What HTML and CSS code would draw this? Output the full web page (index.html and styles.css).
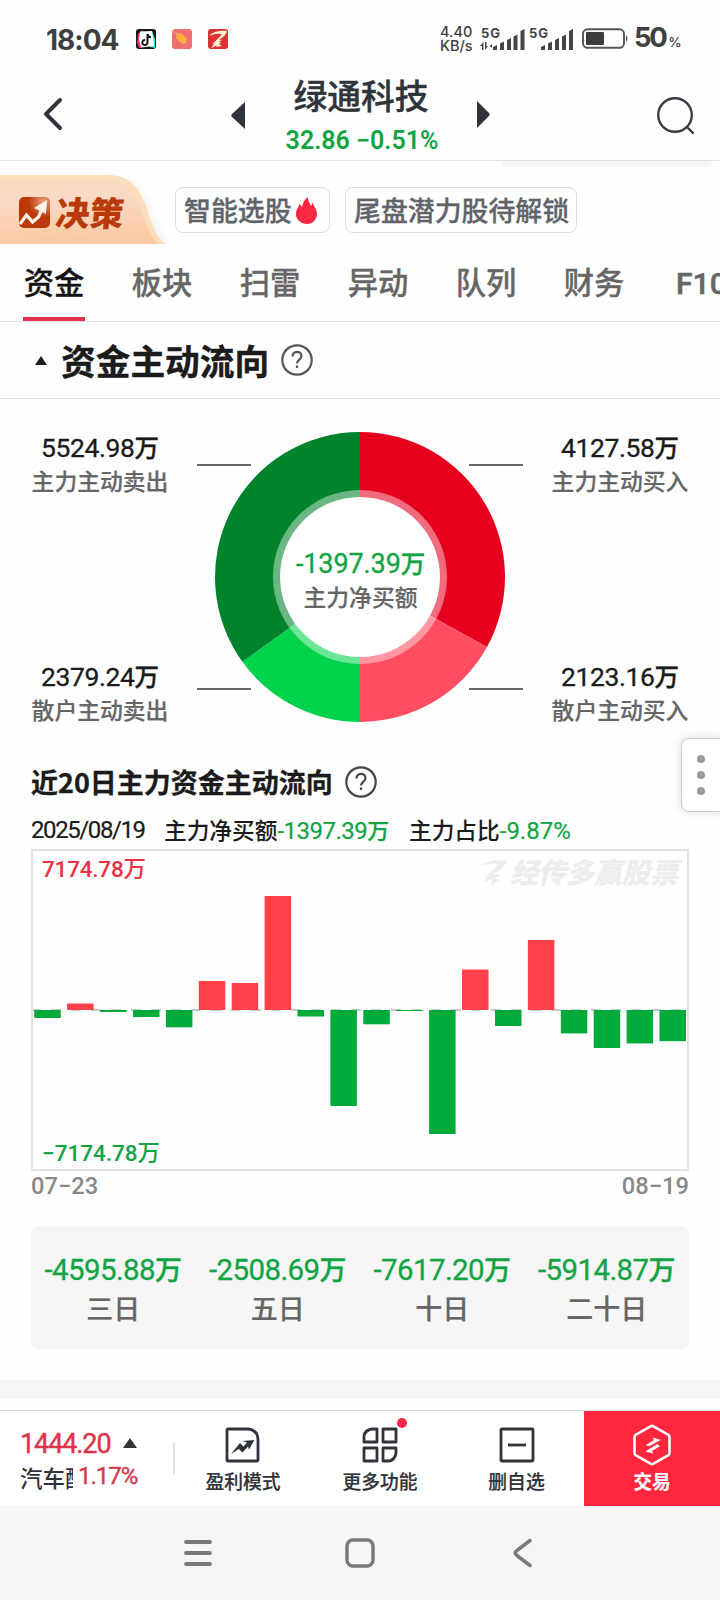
FILE: index.html
```html
<!DOCTYPE html>
<html lang="zh-CN">
<head>
<meta charset="utf-8">
<title>绿通科技</title>
<link rel="stylesheet" href="styles.css">
</head>
<body>
<div class="phone">
  <div class="status">
    <span class="clock">18:04</span>
    <svg class="app-icons" width="92" height="20" viewBox="0 0 92 20">
      <rect width="20" height="20" rx="3" fill="#151515"/>
      <path d="M2 5l5-4v17l-4 1-2-6z" fill="#ff3263"/><path d="M16 2l3 8v9l-5-1z" fill="#36e6ea"/>
      <path d="M4 2.500l12-.5 2 15-13 1.500-2-8z" fill="#fff"/>
      <path d="M11.500 5v8.500a2.600 2.600 0 1 1-2.400-2.600M11.500 5q.6 3 3.500 3.200" fill="none" stroke="#151515" stroke-width="2"/>
      <rect x="36" width="20" height="20" rx="3" fill="#f07072"/>
      <path d="M41 5l4-1 6 6-1 4-4 1-6-6z" fill="#ffb03b"/><path d="M36 1l5 4" stroke="#ffd9a0" stroke-dasharray="1.500 1"/>
      <rect x="72" width="20" height="20" rx="3" fill="#d93434"/>
      <path d="M74 6q6-5 17-4-1 5-8 8.500l3 .5-3 1.500 2 1-2 1.500 3 2-6 1 1-2-6 3.500 3-4.500-2 .5 8-8q2-2 1-2.500-5-1-11 1.500z" fill="#fff0d0"/>
    </svg>
    <span class="net"><span>4.40</span><span>KB/s</span></span>
    <svg class="signals" width="95" height="26" viewBox="0 0 95 26" fill="#444">
      <text x="1" y="12" class="g5" textLength="19">5G</text><text x="49" y="12" class="g5" textLength="19">5G</text>
      <path d="M0 20l3.500-4v8H2v-4zM5 16h1.500v4H8l-3 4zM9.500 20l2.500-2v4z"/>
      <path d="M13 21l4-2v5h-4zM20 17.500l4-2V24h-4zM27 14l4-2v12h-4zM33.500 10.500l4-2V24h-4zM40.500 5l4-2v21h-4z"/>
      <path d="M61 21l4-2v5h-4zM68 17.500l4-2V24h-4zM75 14l4-2v12h-4zM82 10.500l4-2V24h-4zM89 5l4-2v21h-4z"/>
    </svg>
    <svg class="battery" width="48" height="22" viewBox="0 0 48 22">
      <rect x="1" y="1.300" width="41" height="18.500" rx="4.500" fill="none" stroke="#555" stroke-width="1.900"/>
      <rect x="4" y="4" width="18" height="13" rx="1" fill="#3d3d3d"/><path d="M44 7q3 3.500 0 7z" fill="#444"/>
    </svg>
    <span class="pct">50<small>%</small></span>
  </div>

  <header class="header">
    <svg class="back" width="20" height="34" viewBox="0 0 20 34"><path d="M17 3L3 17l14 14" fill="none" stroke="#2f333a" stroke-width="4" stroke-linecap="round" stroke-linejoin="round"/></svg>
    <svg class="prev" width="14" height="27"><path d="M14 0v27L1 15q-1.500-1.500 0-3z" fill="#2f333a"/></svg>
    <div class="stock"><h1>绿通科技</h1><p>32.86 −0.51%</p></div>
    <svg class="next" width="14" height="27"><path d="M0 0v27l12-12q1.500-1.500 0-3z" fill="#2f333a"/></svg>
    <svg class="search" width="40" height="40" viewBox="0 0 40 40" fill="none" stroke="#3c3c44" stroke-width="2.400" stroke-linecap="round"><circle cx="19" cy="19" r="16.800"/><path d="M31 31l6 6"/></svg>
  </header>
  <div class="peek"><i></i></div>

  <div class="promo">
    <div class="decision">
      <svg class="decision-bg" width="170" height="69" viewBox="0 0 170 69">
        <defs>
          <linearGradient id="peach" x1="0" y1="0" x2=".15" y2="1"><stop offset="0" stop-color="#f8d9c0"/><stop offset=".35" stop-color="#f9dac5"/><stop offset="1" stop-color="#fbc9a2"/></linearGradient>
          <filter id="soft" x="-10%" y="-10%" width="125%" height="125%"><feGaussianBlur stdDeviation="4"/></filter>
        </defs>
        <path d="M60 4h55q24 0 33 29 8 24 19 35H60z" fill="#e9e4e2" opacity=".6" filter="url(#soft)"/>
        <path d="M0 0h110q26 0 37 34 8 29 19 35H0z" fill="#fbdfbd"/>
        <path d="M0 5h108q23 0 33 29 8 27 18 35H0z" fill="url(#peach)"/>
      </svg>
      <div class="decision-body">
        <svg width="32" height="31" viewBox="0 0 32 31">
          <defs><radialGradient id="rust" cx=".8" cy=".15" r=".5"><stop offset="0" stop-color="#eea07a"/><stop offset="1" stop-color="#b93a08"/></radialGradient></defs>
          <rect x="0" y="0" width="31" height="31" rx="5" fill="url(#rust)"/>
          <path d="M1 27L7.500 18l6 7 6-5 4-9" fill="none" stroke="#fff2e6" stroke-width="3.200"/><path d="M15 11l13-8-1 14z" fill="#fff2e6"/>
        </svg>
        <span>决策</span>
      </div>
    </div>
    <div class="chip chip-a">智能选股<svg width="22" height="27" viewBox="0 0 22 27"><path d="M11.500 0q.5 4 3.500 9 1.500-1.500 1.500-4 .5 3 3 6.500c4 7-.5 15.500-8.500 15.500S-2.500 19.500 1 12.500q2-3 2-5.500 2 1 3 3Q7 4 11.500 0z" fill="#fa2842"/></svg></div>
    <div class="chip chip-b">尾盘潜力股待解锁</div>
  </div>

  <nav class="tabs">
    <span class="on">资金</span><span>板块</span><span>扫雷</span><span>异动</span><span>队列</span><span>财务</span><span class="f10">F10</span>
  </nav>

  <div class="section-head">
    <svg width="12" height="9"><path d="M6 0l6 9H0z" fill="#1b1b1b"/></svg>
    <h2>资金主动流向</h2>
    <svg width="32" height="32" viewBox="0 0 32 32" fill="none" stroke="#555" stroke-width="2.200"><circle cx="16" cy="16" r="14.700"/><path d="M11.500 12.500c0-6 9-6 9-.5 0 4-4.500 3.800-4.500 7.500"/><path d="M16 21.500v2.500"/></svg>
  </div>

  <section class="flow">
    <div class="side left">
      <div class="amount"><b>5524.98<em>万</em></b><span>主力主动卖出</span></div>
      <div class="amount"><b>2379.24<em>万</em></b><span>散户主动卖出</span></div>
    </div>
    <div class="donut">
      <svg width="328" height="292" viewBox="0 0 328 292">
        <g transform="translate(164 146)">
          <path d="M0 0V-145A145 145 0 0 1 126.980 70Z" fill="#e6001e"/>
          <path d="M0 0L126.980 70A145 145 0 0 1 0 145Z" fill="#ff4d61"/>
          <path d="M0 0V145A145 145 0 0 1 -117.600 84.800Z" fill="#00d34a"/>
          <path d="M0 0L-117.600 84.800A145 145 0 0 1 0 -145Z" fill="#00842b"/>
          <circle r="87" fill="#fff" opacity=".42"/><circle r="80" fill="#fff"/>
        </g>
        <path d="M1 34h54M1 258h54M273 34h54M273 258h54" stroke="#666" stroke-width="2"/>
      </svg>
      <div class="net-buy"><b>-1397.39<em>万</em></b><span>主力净买额</span></div>
    </div>
    <div class="side right">
      <div class="amount"><b>4127.58<em>万</em></b><span>主力主动买入</span></div>
      <div class="amount"><b>2123.16<em>万</em></b><span>散户主动买入</span></div>
    </div>
  </section>

  <section class="history">
    <div class="history-head">
      <h3>近20日主力资金主动流向</h3>
      <svg width="32" height="32" viewBox="0 0 32 32" fill="none" stroke="#444" stroke-width="2.200"><circle cx="16" cy="16" r="14.700"/><path d="M11.500 12.500c0-6 9-6 9-.5 0 4-4.500 3.800-4.500 7.500"/><path d="M16 21.500v2.500"/></svg>
    </div>
    <div class="meta"><span class="date">2025/08/19</span><span class="m1">主力净买额<i>-1397.39<em>万</em></i></span><span class="m2">主力占比<i>-9.87%</i></span></div>
    <div class="chart">
      <svg width="658" height="322" viewBox="0 0 658 322">
        <g class="mark" fill="#ededed">
          <path d="M448 17q12-8 28-5-2 7-14 13l9 1-8 3 6 2-9 5 1-6-8 3 4-5-4 1 10-9q5-4 3-5-7-1-18 2z"/>
          <text x="479" y="34" textLength="168">经传多赢股票</text>
        </g>
        <path d="M0 161h658" stroke="#c9c9c9" stroke-width="2" stroke-dasharray="10 10"/>
        <g fill="#ff4149">
          <rect x="36.100" y="154.500" width="26.500" height="6.500"/><rect x="167.800" y="132" width="26.500" height="29"/><rect x="200.700" y="134" width="26.500" height="27"/><rect x="233.600" y="47" width="26.500" height="114"/><rect x="431" y="120.500" width="26.500" height="40.500"/><rect x="496.900" y="91" width="26.500" height="70"/>
        </g>
        <g fill="#00ab3a">
          <rect x="3.200" y="161" width="26.500" height="8"/><rect x="69.100" y="161" width="26.500" height="2"/><rect x="102" y="161" width="26.500" height="7"/><rect x="134.900" y="161" width="26.500" height="17.300"/><rect x="266.500" y="161" width="26.500" height="6.500"/><rect x="299.400" y="161" width="26.500" height="96"/><rect x="332.300" y="161" width="26.500" height="14.300"/><rect x="365.200" y="161" width="26.500" height="1"/><rect x="398.100" y="161" width="26.500" height="124"/><rect x="464" y="161" width="26.500" height="16"/><rect x="529.800" y="161" width="26.500" height="23.400"/><rect x="562.700" y="161" width="26.500" height="38"/><rect x="595.600" y="161" width="26.500" height="33.400"/><rect x="628.500" y="161" width="26.500" height="31.200"/>
        </g>
        <rect x="1" y="1" width="656" height="320" fill="none" stroke="#e3e3e3" stroke-width="2"/>
        <text x="11" y="28" class="axis" fill="#e83246" textLength="104">7174.78万</text>
        <text x="11" y="312" class="axis" fill="#12a443" textLength="118">−7174.78万</text>
      </svg>
    </div>
    <div class="dates"><span>07−23</span><span>08−19</span></div>
    <div class="periods">
      <div><b>-4595.88<em>万</em></b><span>三日</span></div>
      <div><b>-2508.69<em>万</em></b><span>五日</span></div>
      <div><b>-7617.20<em>万</em></b><span>十日</span></div>
      <div><b>-5914.87<em>万</em></b><span>二十日</span></div>
    </div>
    <div class="handle"><i></i><i></i><i></i></div>
  </section>

  <div class="band"></div>

  <footer class="toolbar">
    <div class="index">
      <div class="index-top"><b>1444.20</b><svg width="14" height="10"><path d="M7 0l7 10H0z" fill="#2f333a"/></svg></div>
      <div class="index-bottom"><span>汽车配</span><b>1.17%</b></div>
    </div>
    <i class="divider"></i>
    <div class="tool t1">
      <svg width="36" height="36" viewBox="0 0 36 36"><path d="M3 2h20q10 1 10 11v20q0 1-1 1H3q-1 0-1-1V3q0-1 1-1z" fill="none" stroke="#2f333a" stroke-width="2.800"/><path d="M6 27l9-11 3.500 3.500 3.500-4-4.500-1.500 12-1-5.500 9.500-1-3-5.500 6-3.500-3.500z" fill="#2f333a"/></svg>
      <span>盈利模式</span>
    </div>
    <div class="tool t2">
      <svg width="36" height="36" viewBox="0 0 36 36" fill="none" stroke="#2f333a" stroke-width="2.800"><path d="M10 2h5v13H2V9q1-6 8-7zM21 2h13v13H21zM2 21h13v13H2zM21 21h13v5q-1 7-7 8h-6z" stroke-linejoin="round"/></svg>
      <span>更多功能</span><i class="dot"></i>
    </div>
    <div class="tool t3">
      <svg width="36" height="36" viewBox="0 0 36 36" fill="none" stroke="#2f333a" stroke-width="2.800"><rect x="2" y="2" width="32" height="32" rx="1"/><path d="M9 18h18"/></svg>
      <span>删自选</span>
    </div>
    <div class="tool trade">
      <svg width="38" height="42" viewBox="0 0 38 42"><path d="M17.500 2.300q1.500-.8 3 0L35 10.500q1.500 1 1.500 2.500v16q0 1.500-1.500 2.500l-14.500 8.200q-1.500.8-3 0L3 31.500Q1.500 30.500 1.500 29V13Q1.500 11.500 3 10.500z" fill="none" stroke="#fff" stroke-width="2.600"/><path d="M13.500 21l8-5-1.500-2 7 2-11 6zM26.500 22l-8 5 1.500 2-7-1.500 11-7z" fill="#fff" stroke="#fff" stroke-width=".6"/></svg>
      <span>交易</span>
    </div>
  </footer>

  <div class="sysnav">
    <svg width="28" height="28" viewBox="0 0 28 28" stroke="#7a7a7a" stroke-width="3.800" stroke-linecap="round"><path d="M2 3h24M2 14h24M2 25h24"/></svg>
    <svg width="30" height="30" viewBox="0 0 30 30" fill="none" stroke="#7a7a7a" stroke-width="3.500"><rect x="2" y="2" width="26" height="26" rx="6"/></svg>
    <svg width="19" height="30" viewBox="0 0 19 30" fill="none" stroke="#7a7a7a" stroke-width="3.500" stroke-linecap="round"><path d="M17 2.500L4 12.500q-3.500 2.500 0 5L17 27.500"/></svg>
  </div>
</div>
</body>
</html>
```
FILE: styles.css
```css
* { box-sizing: border-box; }
body { margin: 0; background: #fff; font-family: "Noto Sans CJK SC", sans-serif; font-weight: 500; color: #1b1b1b; }
h1, h2, h3, p { margin: 0; }
svg { display: block; flex: none; }
b, em, i { font-style: normal; font-weight: inherit; }
.phone { width: 720px; height: 1600px; overflow: hidden; background: #fefefe; display: flex; flex-direction: column; }
.phone > * { flex: none; }

.status { height: 78px; display: flex; align-items: center; padding-left: 46px; color: #3f3f3f; }
.clock { width: 90px; font: 700 28px/36px Inter, sans-serif; letter-spacing: -1px; padding-top: 1px; }
.net { margin-left: 212px; width: 40px; display: flex; flex-direction: column; font: 500 14.5px/14px Inter, sans-serif; }
.net span { white-space: nowrap; }
.signals { margin-bottom: 1px; }
.g5 { font: 700 13px Inter, sans-serif; }
.battery { margin-left: 7px; }
.pct { margin-left: 4px; padding-top: 1px; font: 700 27.5px/36px Inter, sans-serif; letter-spacing: -2.4px; white-space: nowrap; }
.pct small { font-size: 13.5px; font-weight: 500; margin-left: 3px; letter-spacing: 0; }

.header { height: 83px; border-bottom: 1px solid #e2e2e2; display: flex; align-items: flex-start; padding-left: 43px; }
.back { margin-top: 19px; }
.prev { margin: 24px 0 0 168px; }
.next { margin: 23px 0 0; }
.search { margin: 18px 0 0 165px; }
.stock { width: 232px; text-align: center; }
.stock h1 { font-size: 33.8px; line-height: 34px; font-weight: 500; color: #2f333a; -webkit-text-stroke: .4px; }
.stock p { font: 600 25px/36px Roboto, sans-serif; color: #12a443; margin-top: 11px; padding-left: 2px; }

.peek { height: 14px; padding-left: 501px; }
.peek i { display: block; width: 211px; height: 6px; background: #f6f6f6; border-radius: 0 0 5px 5px; }

.promo { height: 68px; display: flex; align-items: flex-start; }
.decision { width: 175px; height: 68px; position: relative; }
.decision-bg { position: absolute; left: 0; top: 0; }
.decision-body { position: relative; display: flex; padding: 22px 0 0 19px; gap: 5px; }
.decision-body span { font-size: 34px; line-height: 30px; font-weight: 900; color: #b93a08; transform: skewX(-6deg); white-space: nowrap; }
.chip { margin: 12px 0 0 15px; height: 46px; border: 1px solid #dedede; border-radius: 8px; display: flex; align-items: center; padding: 0 8px; font-size: 26.9px; line-height: 44px; color: #5f646a; white-space: nowrap; -webkit-text-stroke: .3px; }
.chip-a { width: 155px; margin-left: 0; }
.chip-b { width: 232px; }
.chip svg { margin-left: 4px; }

.tabs { height: 79px; border-bottom: 1px solid #e2e2e2; display: flex; gap: 46px; padding-left: 23px; overflow: hidden; font-size: 30.3px; line-height: 77px; color: #666; -webkit-text-stroke: .3px; }
.tabs span { width: 62px; flex: none; text-align: center; white-space: nowrap; }
.tabs .on { color: #141414; border-bottom: 4px solid #e0334a; }
.tabs .f10 { text-align: left; padding-left: 5px; font: 600 30px/81px Roboto, sans-serif; }

.section-head { height: 77px; border-bottom: 1px solid #e2e2e2; display: flex; align-items: center; padding-left: 35px; }
.section-head h2 { margin: 0 11px 0 14px; font-size: 34.7px; line-height: 60px; font-weight: 700; -webkit-text-stroke: .4px; }
.section-head svg:last-child { margin-left: 1px; }

.flow { height: 346px; padding-top: 32px; display: flex; justify-content: center; }
.side { width: 196px; display: flex; flex-direction: column; gap: 164px; }
.left { padding-left: 4px; }
.right { padding-right: 4px; }
.amount { height: 65px; display: flex; flex-direction: column; align-items: center; }
.amount b, .net-buy b, .periods b { font-family: Roboto, sans-serif; font-weight: 400; white-space: nowrap; display: block; }
.amount b { font-size: 26.5px; line-height: 32px; letter-spacing: -0.4px; -webkit-text-stroke: .3px; }
.amount em { font: 500 24.5px/32px "Noto Sans CJK SC"; letter-spacing: 0; }
.amount span, .net-buy span { font-size: 22.8px; line-height: 33px; color: #666; white-space: nowrap; -webkit-text-stroke: .2px; }
.donut { width: 328px; position: relative; }
.net-buy { position: absolute; left: 1px; right: 0; top: 114px; text-align: center; }
.net-buy b { color: #12a443; font-size: 27px; line-height: 35px; letter-spacing: -0.1px; -webkit-text-stroke: .3px; }
.net-buy em { font: 500 24.5px/35px "Noto Sans CJK SC"; }
.net-buy span { display: block; line-height: 30px; }

.history { height: 635px; padding: 17px 31px 0; position: relative; }
.history-head { display: flex; align-items: center; gap: 12px; height: 40px; }
.history-head h3 { font-size: 27px; line-height: 40px; font-weight: 700; white-space: nowrap; -webkit-text-stroke: .3px; }
.meta { display: flex; margin-top: 8px; height: 39px; font-size: 22.7px; line-height: 38px; padding-top: 1px; white-space: nowrap; }
.meta .date, .meta i { font-family: Roboto, sans-serif; font-weight: 400; font-size: 24px; letter-spacing: -0.5px; -webkit-text-stroke: .2px; }
.meta .date { width: 133px; letter-spacing: -1.4px; }
.meta .m1 { width: 245px; }
.meta .m2 i { letter-spacing: 0; }
.meta i { color: #12a443; }
.meta em { font: 500 22px "Noto Sans CJK SC"; letter-spacing: 0; }
.chart { height: 322px; }
.axis { font: 500 22.5px Roboto, "Noto Sans CJK SC", sans-serif; }
.mark text { font: italic 900 28px "Noto Sans CJK SC", sans-serif; }
.dates { display: flex; justify-content: space-between; font: 500 23.7px/30px Roboto, sans-serif; color: #888; height: 55px; }
.periods { height: 123px; background: #f6f6f6; border-radius: 8px; display: grid; grid-template-columns: repeat(4, 1fr); padding-top: 24px; text-align: center; }
.periods b { font-size: 29.5px; line-height: 38px; letter-spacing: -0.6px; color: #12a443; -webkit-text-stroke: .3px; }
.periods em { font: 500 27px/38px "Noto Sans CJK SC"; letter-spacing: 0; }
.periods span { display: block; font-size: 27px; line-height: 38px; color: #666; -webkit-text-stroke: .2px; }
.handle { position: absolute; right: -6px; top: -7px; width: 45px; height: 74px; border: 1px solid #ccc; border-radius: 8px; background: #fff; box-shadow: 0 0 10px #ddd; display: flex; flex-direction: column; align-items: center; justify-content: center; gap: 8px; padding-right: 6px; }
.handle i { width: 8px; height: 8px; border-radius: 50%; background: #999; }

.band { height: 19px; background: #f6f6f6; margin-bottom: 11px; }

.toolbar { height: 96px; border-top: 1px solid #ddd; display: flex; background: #fff; }
.index { width: 173px; padding: 15px 0 0 20px; }
.index-top { display: flex; align-items: center; justify-content: space-between; height: 36px; width: 117px; }
.index-top svg { margin-bottom: 2px; }
.index-top b { font: 400 27px/36px Roboto, sans-serif; color: #e0334a; letter-spacing: -1.1px; -webkit-text-stroke: .4px; }
.index-bottom { display: flex; height: 34px; font-size: 22.5px; line-height: 31px; color: #2f333a; }
.index-bottom span { width: 53px; overflow: hidden; white-space: nowrap; }
.index-bottom b { font: 400 24px/28px Roboto, sans-serif; color: #d8394e; margin-left: 5px; -webkit-text-stroke: .4px; letter-spacing: -1px; }
.divider { width: 2px; height: 31px; background: #e2e2e2; margin-top: 32px; }
.tool { display: flex; flex-direction: column; align-items: center; position: relative; padding-top: 16px; font-size: 18.8px; color: #2f333a; -webkit-text-stroke: .2px; }
.tool span { line-height: 28px; margin-top: 4px; white-space: nowrap; }
.t1 { width: 136px; }
.t2 { width: 138px; }
.t3 { width: 135px; }
.trade { width: 136px; background: #ff263e; color: #fff; padding-top: 13px; }
.trade span { margin-top: 1px; font-weight: 700; }
.dot { position: absolute; left: 86px; top: 7px; width: 10px; height: 10px; border-radius: 50%; background: #fa2842; }

.sysnav { height: 94px; background: #f6f6f6; display: flex; align-items: center; padding-left: 184px; }
.sysnav svg:nth-child(2) { margin-left: 133px; }
.sysnav svg:nth-child(3) { margin-left: 138px; }
```
